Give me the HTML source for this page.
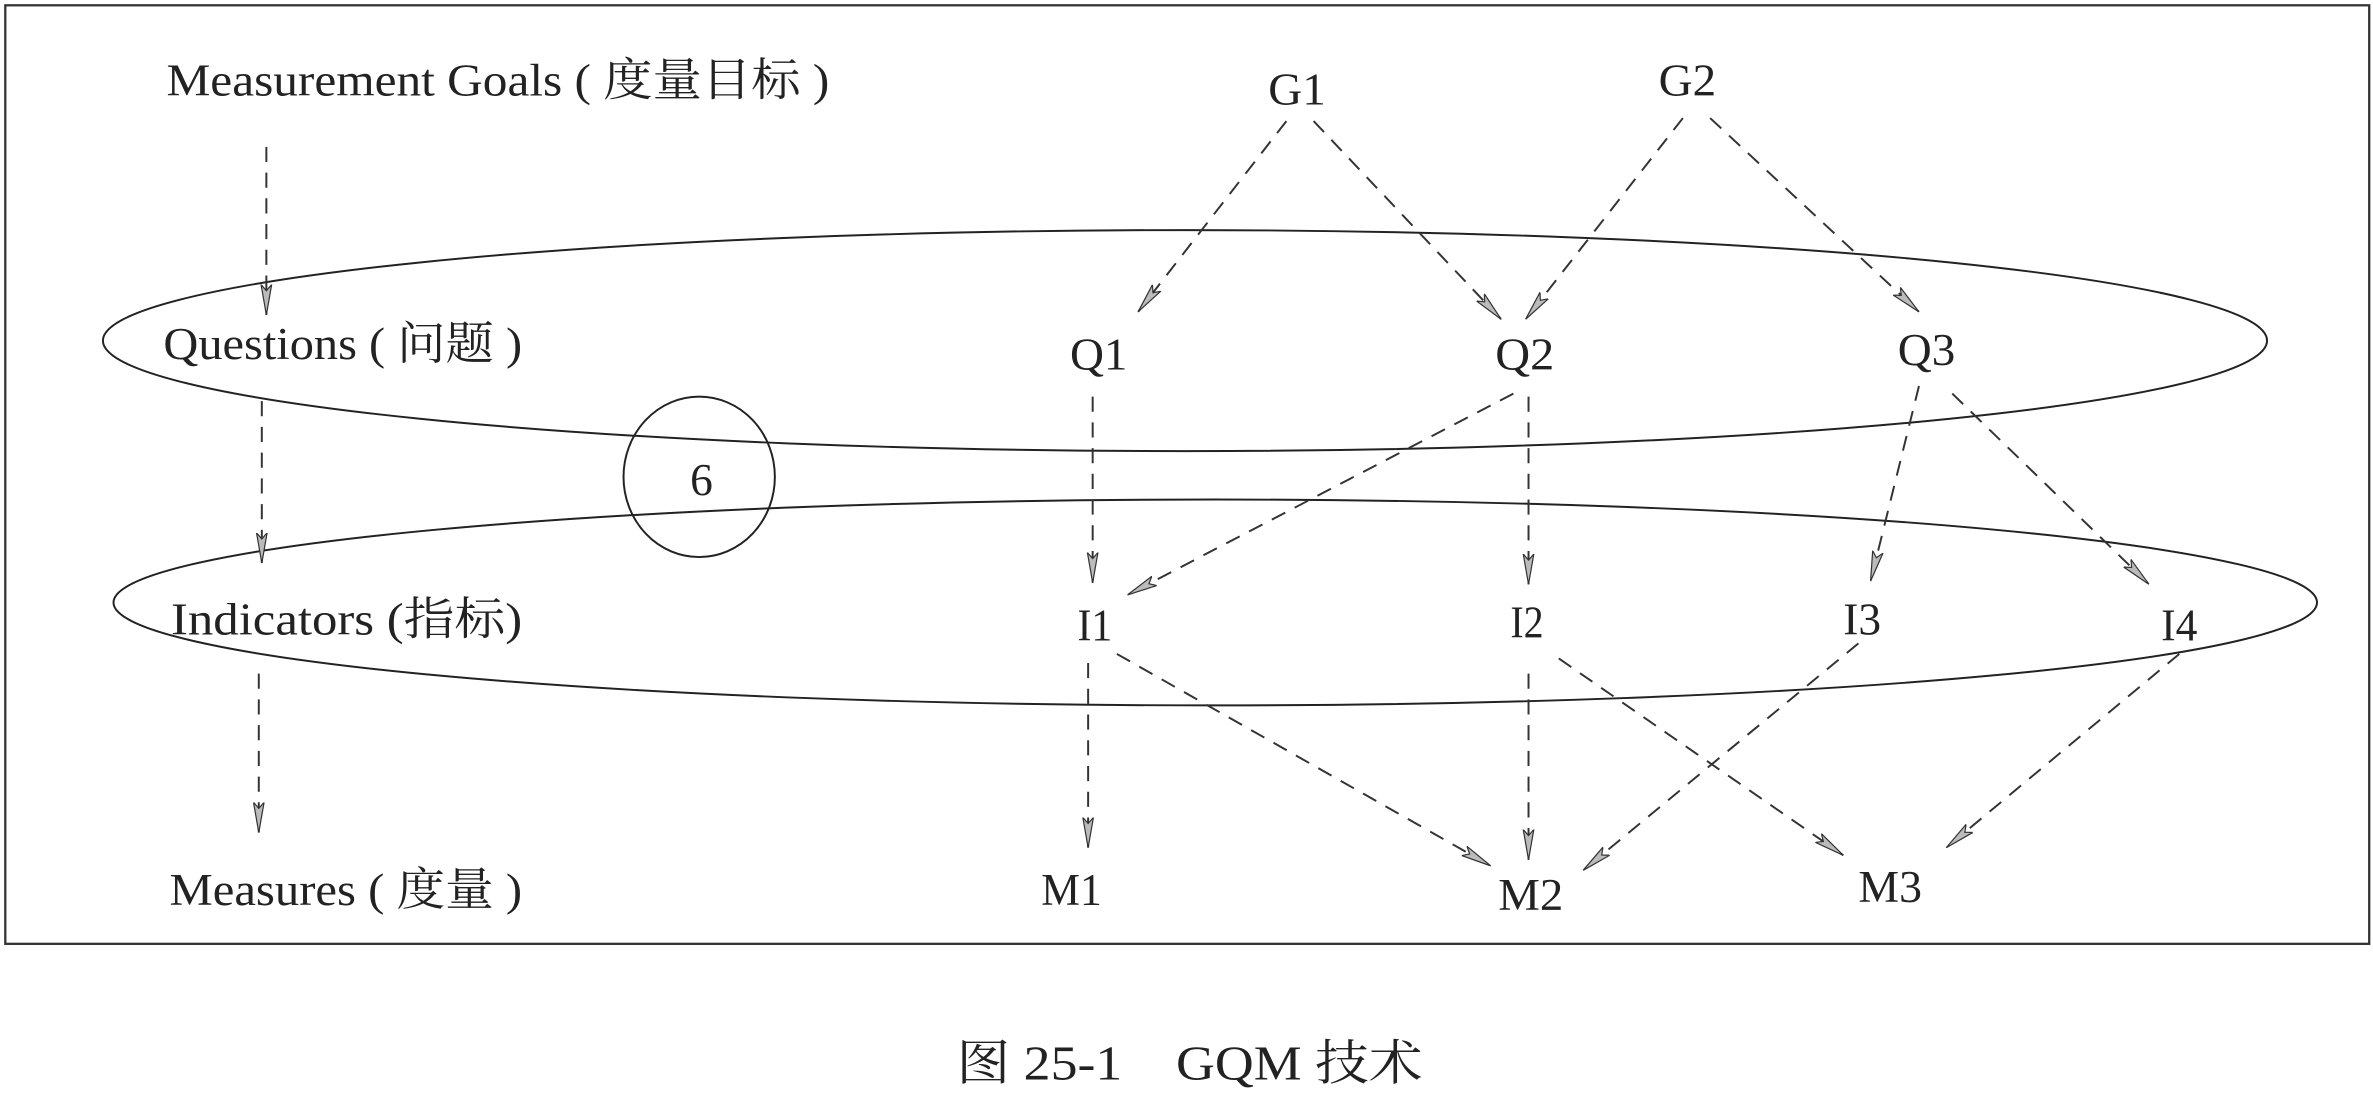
<!DOCTYPE html>
<html><head><meta charset="utf-8"><style>
html,body{margin:0;padding:0;background:#fff;}
svg{display:block;}
text{font-family:"Liberation Serif","Noto Serif CJK SC","Noto Sans CJK SC",serif;fill:#222;}
</style></head><body>
<svg width="2373" height="1099" viewBox="0 0 1568 726" preserveAspectRatio="none" xmlns="http://www.w3.org/2000/svg">
<defs>
<marker id="ah" viewBox="0 0 20 8" refX="20" refY="4" markerWidth="20" markerHeight="8" markerUnits="userSpaceOnUse" orient="auto">
<path d="M0,0.5 L20,4 L0,7.5 L4,4 Z" fill="#bbb" stroke="#333" stroke-width="0.8"/>
</marker>
</defs>
<rect x="3.5" y="3.5" width="1562" height="620" fill="none" stroke="#333" stroke-width="1.5"/>
<ellipse cx="783" cy="225" rx="715" ry="73" fill="none" stroke="#222" stroke-width="1.3"/>
<ellipse cx="803" cy="398" rx="728" ry="68" fill="none" stroke="#222" stroke-width="1.3"/>
<ellipse cx="462" cy="315" rx="50" ry="53" fill="none" stroke="#222" stroke-width="1.3"/>
<g fill="none" stroke="#333" stroke-width="1.3" stroke-dasharray="10,7" marker-end="url(#ah)">
<line x1="176" y1="97" x2="176" y2="208"/>
<line x1="173" y1="265" x2="173" y2="372"/>
<line x1="171" y1="445" x2="171" y2="550"/>
<line x1="850" y1="80" x2="752" y2="206"/>
<line x1="868" y1="80" x2="992" y2="211"/>
<line x1="1112" y1="78" x2="1008" y2="211"/>
<line x1="1130" y1="78" x2="1268" y2="206"/>
<line x1="722" y1="262" x2="722" y2="385"/>
<line x1="1000" y1="260" x2="745" y2="393"/>
<line x1="1010" y1="262" x2="1010" y2="386"/>
<line x1="1268" y1="255" x2="1236" y2="384"/>
<line x1="1290" y1="260" x2="1420" y2="386"/>
<line x1="719" y1="438" x2="719" y2="560"/>
<line x1="738" y1="432" x2="985" y2="572"/>
<line x1="1010" y1="445" x2="1010" y2="568"/>
<line x1="1228" y1="425" x2="1046" y2="575"/>
<line x1="1030" y1="435" x2="1218" y2="565"/>
<line x1="1440" y1="432" x2="1286" y2="560"/>
</g>
<g font-size="30">
<text x="110" y="63" textLength="438" lengthAdjust="spacingAndGlyphs">Measurement Goals ( 度量目标 )</text>
<text x="108" y="237" textLength="237" lengthAdjust="spacingAndGlyphs">Questions ( 问题 )</text>
<text x="113" y="419" textLength="232" lengthAdjust="spacingAndGlyphs">Indicators (指标)</text>
<text x="112" y="598" textLength="233" lengthAdjust="spacingAndGlyphs">Measures ( 度量 )</text>
<text x="838" y="69" textLength="38" lengthAdjust="spacingAndGlyphs">G1</text>
<text x="1096" y="63" textLength="38" lengthAdjust="spacingAndGlyphs">G2</text>
<text x="707" y="244" textLength="38" lengthAdjust="spacingAndGlyphs">Q1</text>
<text x="988" y="244" textLength="39" lengthAdjust="spacingAndGlyphs">Q2</text>
<text x="1254" y="241" textLength="38" lengthAdjust="spacingAndGlyphs">Q3</text>
<text x="456" y="327">6</text>
<text x="712" y="423" textLength="23" lengthAdjust="spacingAndGlyphs">I1</text>
<text x="998" y="421" textLength="22" lengthAdjust="spacingAndGlyphs">I2</text>
<text x="1218" y="419" textLength="25" lengthAdjust="spacingAndGlyphs">I3</text>
<text x="1428" y="423" textLength="24" lengthAdjust="spacingAndGlyphs">I4</text>
<text x="688" y="598" textLength="40" lengthAdjust="spacingAndGlyphs">M1</text>
<text x="990" y="601" textLength="43" lengthAdjust="spacingAndGlyphs">M2</text>
<text x="1228" y="596" textLength="42" lengthAdjust="spacingAndGlyphs">M3</text>
</g>
<text x="632" y="713" font-size="32" textLength="308" lengthAdjust="spacingAndGlyphs">图 25-1　GQM 技术</text>
</svg>
</body></html>
